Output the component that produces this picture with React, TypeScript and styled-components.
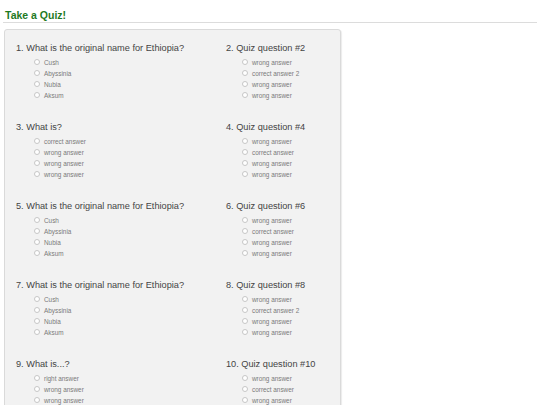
import React from 'react'
import styled, { createGlobalStyle } from 'styled-components'

const GlobalStyle = createGlobalStyle`
  html, body {
    margin: 0;
    padding: 0;
    background: #fff;
  }
  body {
    padding: 0 3px;
    font-family: "Liberation Sans", Arial, sans-serif;
  }
`

const Title = styled.h1`
  margin: 0;
  padding: 9px 0 1px 2px;
  font-size: 10.5px;
  line-height: 12px;
  font-weight: bold;
  color: #1f7a1f;
  border-bottom: 1px solid #dcdcdc;
`

const Panel = styled.div`
  width: 337px;
  box-sizing: border-box;
  margin: 6px 0 0 1px;
  padding: 12px 0 0 11px;
  background: #f2f2f2;
  border: 1px solid #dadada;
  border-radius: 3px;
  box-shadow: 1px 1px 1px rgba(0, 0, 0, 0.08);
`

const Grid = styled.div`
  display: grid;
  grid-template-columns: 210px 1fr;
  grid-auto-rows: 79px;
`

const Question = styled.div`
  min-width: 0;
`

const Heading = styled.div`
  font-size: 9.2px;
  line-height: 12px;
  color: #444;
  white-space: nowrap;
`

const Options = styled.ul<{ $indent: number }>`
  list-style: none;
  margin: 2.5px 0 0;
  padding: 0 0 0 ${(p) => p.$indent}px;
`

const Option = styled.li`
  display: flex;
  align-items: center;
  gap: 4px;
  height: 11px;
  font-size: 6.4px;
  color: #7a7a7a;
  white-space: nowrap;
`

const Radio = styled.span`
  width: 6px;
  height: 6px;
  box-sizing: border-box;
  border: 1px solid #c6c6c6;
  border-radius: 50%;
  background: #fff;
  flex: none;
`

const ethiopia = ['Cush', 'Abyssinia', 'Nubia', 'Aksum']

const questions = [
  { q: '1. What is the original name for Ethiopia?', a: ethiopia },
  { q: '2. Quiz question #2', a: ['wrong answer', 'correct answer 2', 'wrong answer', 'wrong answer'] },
  { q: '3. What is?', a: ['correct answer', 'wrong answer', 'wrong answer', 'wrong answer'] },
  { q: '4. Quiz question #4', a: ['wrong answer', 'correct answer', 'wrong answer', 'wrong answer'] },
  { q: '5. What is the original name for Ethiopia?', a: ethiopia },
  { q: '6. Quiz question #6', a: ['wrong answer', 'correct answer', 'wrong answer', 'wrong answer'] },
  { q: '7. What is the original name for Ethiopia?', a: ethiopia },
  { q: '8. Quiz question #8', a: ['wrong answer', 'correct answer 2', 'wrong answer', 'wrong answer'] },
  { q: '9. What is...?', a: ['right answer', 'wrong answer', 'wrong answer', 'wrong answer'] },
  { q: '10. Quiz question #10', a: ['wrong answer', 'correct answer', 'wrong answer', 'wrong answer'] },
]

const App = () => {
  return (
    <>
      <GlobalStyle />
      <Title>Take a Quiz!</Title>
      <Panel>
        <Grid>
          {questions.map((item, i) => (
            <Question key={i}>
              <Heading>{item.q}</Heading>
              <Options $indent={i % 2 === 0 ? 18 : 16}>
                {item.a.map((ans, j) => (
                  <Option key={j}>
                    <Radio />
                    {ans}
                  </Option>
                ))}
              </Options>
            </Question>
          ))}
        </Grid>
      </Panel>
    </>
  )
}

export default App
